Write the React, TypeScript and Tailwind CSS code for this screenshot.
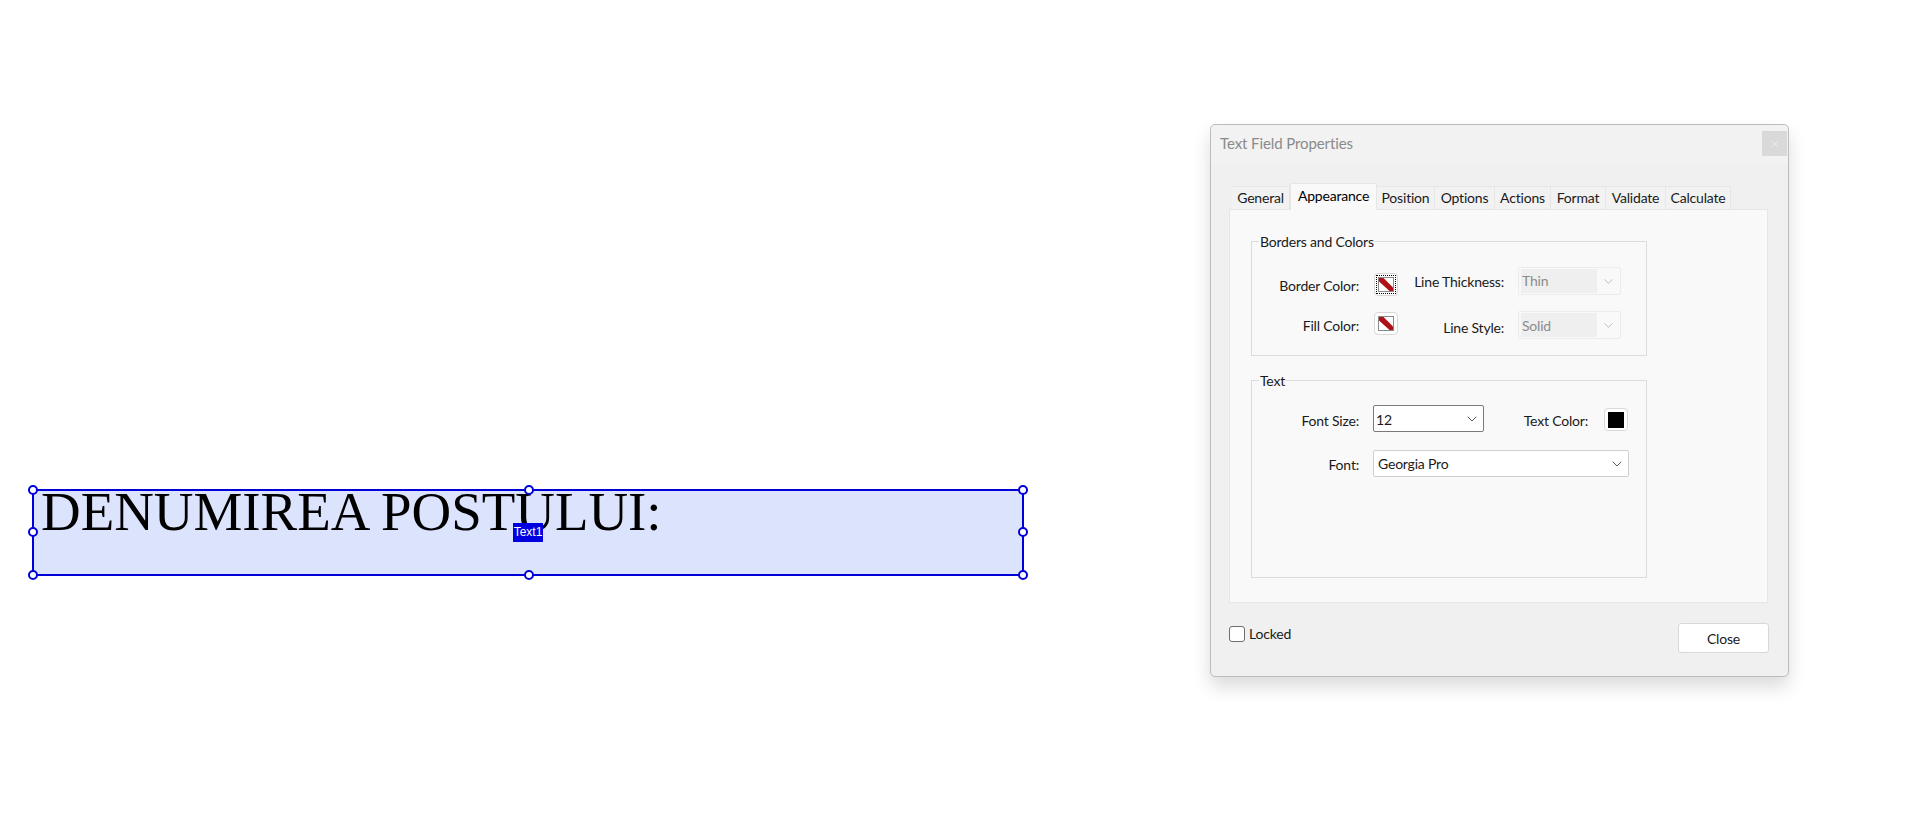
import React from 'react';
import { ChevronDown, X } from 'lucide-react';

const tabs = [
    { name: 'General', w: 'w-[58px]' },
    { name: 'Appearance', w: 'w-[87px]' },
    { name: 'Position', w: 'w-[58px]' },
    { name: 'Options', w: 'w-[60px]' },
    { name: 'Actions', w: 'w-[56px]' },
    { name: 'Format', w: 'w-[55px]' },
    { name: 'Validate', w: 'w-[60px]' },
    { name: 'Calculate', w: 'w-[65px]' },
];

const Handle: React.FC<{ className: string }> = ({ className }) => (
    <span className={`absolute w-[10px] h-[10px] rounded-full bg-white border-2 border-[#0000d8] ${className}`} />
);

const NoColorSwatch: React.FC<{ focused?: boolean; className?: string }> = ({ focused = false, className = '' }) => (
    <div className={`w-[24px] h-[23px] rounded-[4px] border border-[#d8d8d8] bg-white flex items-center justify-center ${className}`}>
        <div className={focused ? 'border border-dotted border-black p-[1px]' : ''}>
            <svg width="16" height="15" viewBox="0 0 16 15" className="block">
                <rect x="0.5" y="0.5" width="15" height="14" fill="#fff" stroke="#8a8a8a" />
                <path d="M1 1 L5.5 1 L15 10.5 L15 14 L11.5 14 L1 4.5 Z" fill="#b01116" />
            </svg>
        </div>
    </div>
);

const DisabledSelect: React.FC<{ value: string; textClass?: string }> = ({ value, textClass = '' }) => (
    <div className="w-[103px] h-[28px] ml-[14px] rounded-[2px] border border-[#ececec] flex items-center pl-[2px] pr-[4px]">
        <div className={`w-[76px] h-[24px] bg-[#efefef] pl-[1px] flex items-center text-[#8c8c8c] ${textClass}`}>{value}</div>
        <ChevronDown size={15} strokeWidth={1} className="ml-auto text-[#9a9a9a]" />
    </div>
);

const App: React.FC = () => {
    return (
        <div className="w-[1910px] h-[826px] bg-white flex items-start overflow-hidden font-['Lato',sans-serif] text-[14px] tracking-[-0.2px] text-[#1a1a1a]">
            <div className="relative ml-[32px] mt-[489px] w-[992px] h-[87px] border-2 border-[#0000d8] bg-[#dbe3fd] pl-[7px] pt-[1px] font-['Liberation_Serif',serif] text-[54.9px] tracking-normal leading-[40px] text-black">
                DENUMIREA POSTULUI:
                <span className="absolute left-[479px] top-[32px] w-[30px] h-[19px] bg-[#0000e0] text-white font-['Liberation_Sans',sans-serif] text-[12px] leading-[19px] text-center">Text1</span>
                <Handle className="-left-[6px] -top-[6px]" />
                <Handle className="left-[490px] -top-[6px]" />
                <Handle className="-right-[6px] -top-[6px]" />
                <Handle className="-left-[6px] top-[36px]" />
                <Handle className="-right-[6px] top-[36px]" />
                <Handle className="-left-[6px] -bottom-[6px]" />
                <Handle className="left-[490px] -bottom-[6px]" />
                <Handle className="-right-[6px] -bottom-[6px]" />
            </div>

            <div className="ml-[186px] mt-[124px] w-[579px] h-[553px] rounded-[5px] border border-[#bcbcbc] bg-[#f0f0f0] shadow-[0_10px_18px_rgba(0,0,0,0.14)]">
                <div className="h-[38px] bg-[#f2f2f2] rounded-t-[5px] flex items-center justify-between pl-[9px] pr-[1px] pb-[1px] text-[#8a8a8a] text-[15px] tracking-[-0.1px]">
                    <span>Text Field Properties</span>
                    <div className="w-[25px] h-[25px] bg-[#d9d9d9] flex items-center justify-center">
                        <X size={10} className="text-[#f0f0f0]" />
                    </div>
                </div>

                <div className="px-[18px]">
                    <div className="flex items-end h-[26px] mt-[20px] pl-[3px]">
                        {tabs.map(tab => (
                            <div
                                key={tab.name}
                                className={
                                    tab.name === 'Appearance'
                                        ? `${tab.w} h-[27px] -mb-[1px] z-10 bg-[#f9f9f9] border border-b-0 border-[#e6e6e6] pb-[3px] flex items-center justify-center text-black`
                                        : `${tab.w} h-[23px] bg-[#f2f2f2] border-r border-t border-[#e6e6e6] pb-[2px] flex items-center justify-center`
                                }
                            >
                                {tab.name}
                            </div>
                        ))}
                    </div>

                    <div className="w-[539px] h-[394px] bg-[#f9f9f9] border border-[#e6e6e6] pl-[21px] pt-[22px]">
                        <fieldset className="w-[396px] h-[124px] border border-[#dcdcdc]">
                            <legend className="ml-[7px] px-[1px] pt-[1px] leading-[18px]">Borders and Colors</legend>
                            <div className="flex items-center h-[28px] mt-[16px]">
                                <div className="w-[107px] text-right mt-[8px]">Border Color:</div>
                                <NoColorSwatch focused className="ml-[15px] mt-[6px]" />
                                <div className="w-[106px] text-right mt-[1px]">Line Thickness:</div>
                                <DisabledSelect value="Thin" textClass="pb-[2px]" />
                            </div>
                            <div className="flex items-center h-[28px] mt-[16px]">
                                <div className="w-[107px] text-right">Fill Color:</div>
                                <NoColorSwatch className="ml-[15px] -mt-[3px]" />
                                <div className="w-[106px] text-right mt-[4px]">Line Style:</div>
                                <DisabledSelect value="Solid" />
                            </div>
                        </fieldset>

                        <fieldset className="w-[396px] h-[207px] mt-[15px] border border-[#dcdcdc]">
                            <legend className="ml-[7px] px-[1px] pt-[1px] leading-[18px]">Text</legend>
                            <div className="flex items-center h-[27px] mt-[15px]">
                                <div className="w-[107px] text-right mt-[4px]">Font Size:</div>
                                <div className="w-[111px] h-[27px] ml-[14px] rounded-[2px] border border-[#7a7a7a] bg-white flex items-center justify-between pl-[2px] pr-[3px]">
                                    <span className="mt-[2px]">12</span>
                                    <ChevronDown size={16} strokeWidth={1.1} />
                                </div>
                                <div className="w-[104px] text-right mt-[4px]">Text Color:</div>
                                <div className="w-[24px] h-[23px] ml-[16px] mt-[2px] rounded-[4px] border border-[#d8d8d8] bg-white flex items-center justify-center">
                                    <div className="w-[16px] h-[16px] bg-black" />
                                </div>
                            </div>
                            <div className="flex items-center h-[27px] mt-[18px]">
                                <div className="w-[107px] text-right mt-[2px]">Font:</div>
                                <div className="w-[256px] h-[27px] ml-[14px] rounded-[2px] border border-[#cfcfcf] bg-white flex items-center justify-between pl-[4px] pr-[3px]">
                                    <span>Georgia Pro</span>
                                    <ChevronDown size={16} strokeWidth={1.1} />
                                </div>
                            </div>
                        </fieldset>
                    </div>

                    <div className="flex items-start justify-between mt-[20px] mr-[1px]">
                        <label className="flex items-center">
                            <span className="w-[16px] h-[16px] rounded-[3px] border border-[#6e6e6e] bg-white" />
                            <span className="ml-[4px]">Locked</span>
                        </label>
                        <button className="w-[91px] h-[30px] rounded-[3px] border border-[#d8d8d8] bg-white">Close</button>
                    </div>
                </div>
            </div>
        </div>
    );
};

export default App;
